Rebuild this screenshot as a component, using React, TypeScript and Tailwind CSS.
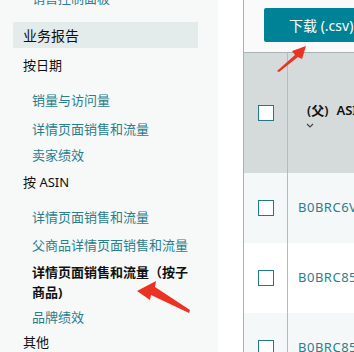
import React from "react";

const cjk = { fontFamily: '"Noto Sans", "Noto Sans CJK SC", sans-serif' };

function Sub({ h, children, bold = false }: { h: string; children: React.ReactNode; bold?: boolean }) {
  return (
    <div className={`${h} flex items-center pl-[32px] pr-[20px] text-[13px] leading-[20px] ${bold ? "font-bold text-[#0f1111]" : "text-[#2a7f8c]"}`}>
      <span>{children}</span>
    </div>
  );
}

function Checkbox() {
  return <div className="w-[16px] h-[16px] border-[1.5px] border-[#1f7a86] bg-white" />;
}

export default function App() {
  return (
    <div className="relative w-[354px] h-[352px] overflow-hidden bg-white" style={cjk}>
      <div className="flex h-full">
        {/* Sidebar */}
        <div className="w-[218px] h-full bg-[#f7f8f8] shrink-0">
          <div className="-mt-[12px] h-[20px] flex items-center pl-[32px] text-[13px] leading-[20px] text-[#2a7f8c]">销售控制面板</div>
          <div className="mt-[14px] ml-[13px] w-[185px] h-[26px] bg-[#e3ebeb] flex items-center pl-[10px] text-[14px] text-[#0f1111]">业务报告</div>
          <div className="h-[36px] flex items-center pl-[23px] text-[13px] text-[#0f1111]">按日期</div>
          <Sub h="h-[32px]">销量与访问量</Sub>
          <Sub h="h-[26px]">详情页面销售和流量</Sub>
          <Sub h="h-[26px]">卖家绩效</Sub>
          <div className="h-[30px] flex items-center pl-[23px] text-[13px] text-[#0f1111]">按 ASIN</div>
          <Sub h="h-[38px]">详情页面销售和流量</Sub>
          <Sub h="h-[18px]">父商品详情页面销售和流量</Sub>
          <div className="pt-[8px] pl-[32px] pr-[20px] text-[13px] leading-[20px] font-bold text-[#0f1111]">详情页面销售和流量（按子商品)</div>
          <Sub h="h-[30px]">品牌绩效</Sub>
          <div className="h-[22px] flex items-center pl-[23px] text-[13px] text-[#0f1111]">其他</div>
        </div>
        {/* gap */}
        <div className="w-[25px] h-full bg-white shrink-0" />
        {/* Right panel */}
        <div className="flex-1 h-full border-l border-[#a9b3b4] bg-[#fafafa] flex flex-col">
          <div className="h-[52px] pt-[8px] pl-[20px] shrink-0">
            <div className="w-[130px] h-[34px] bg-[#008296] rounded-[2px] flex items-center pl-[25px] text-white text-[14px]">
              下载 (.csv)
            </div>
          </div>
          <div className="border-t border-[#a9b3b4] grid grid-cols-[44px_1fr] grid-rows-[120px_70px_70px_70px]">
            <div className="bg-[#d5dbdb] border-r border-[#b3bcbc] flex items-center justify-center">
              <Checkbox />
            </div>
            <div className="bg-[#d5dbdb] flex flex-col justify-center pl-[19px] pt-[4px]">
              <div className="text-[13px] leading-[18px] font-semibold text-[#0f1111] whitespace-nowrap">
                (父)<span className="ml-[8px]">ASIN</span>
              </div>
              <svg width="10" height="8" viewBox="0 0 10 8" className="mt-[3px] -ml-[2px]">
                <path d="M2 2 L5 5 L8 2" fill="none" stroke="#444" strokeWidth="1.2" />
              </svg>
            </div>
            <div className="bg-[#f5f8f8] border-r border-[#b3bcbc] flex items-center justify-center">
              <Checkbox />
            </div>
            <div className="bg-[#f5f8f8] flex items-center pl-[10px] text-[13px] text-[#2a7f8c] tracking-[0.5px] whitespace-nowrap">B0BRC6VXYZ</div>
            <div className="bg-white border-r border-[#b3bcbc] flex items-center justify-center">
              <Checkbox />
            </div>
            <div className="bg-white flex items-center pl-[10px] text-[13px] text-[#2a7f8c] tracking-[0.5px] whitespace-nowrap">B0BRC85XYZ</div>
            <div className="bg-[#f5f8f8] border-r border-[#b3bcbc] flex items-center justify-center">
              <Checkbox />
            </div>
            <div className="bg-[#f5f8f8] flex items-center pl-[10px] text-[13px] text-[#2a7f8c] tracking-[0.5px] whitespace-nowrap">B0BRC85XYZ</div>
          </div>
        </div>
      </div>
      {/* annotation arrows */}
      <svg className="absolute left-0 top-0 pointer-events-none" width="354" height="352">
        <polygon points="277,71 295,55 292,51 306,46 302,59 298,57 279,72" fill="#ea3323" />
        <polygon points="137,291 156,281 155,287 190,310 189,313 151,295 150,300" fill="#ea3323" />
      </svg>
    </div>
  );
}
